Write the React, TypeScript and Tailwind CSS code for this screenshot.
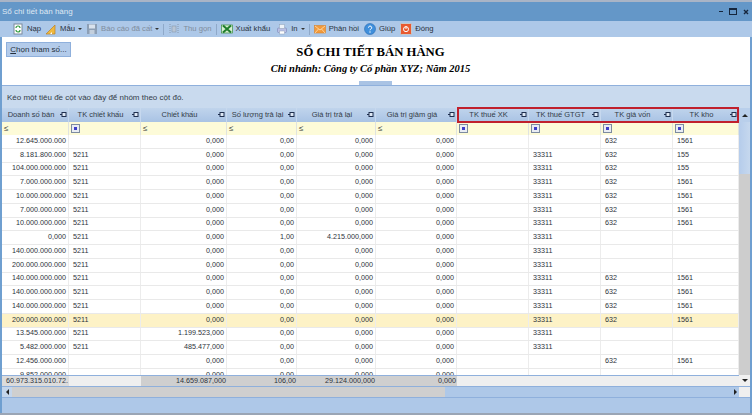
import React from "react";

const cols = "grid grid-cols-[67px_72px_86px_70px_79px_81px_72px_72px_72px_66px]";
type Row = string[];
const rows: Row[] = [
  ["12.645.000.000","","0,000","0,00","0,000","0,000","","","632","1561"],
  ["8.181.800.000","5211","0,000","0,00","0,000","0,000","","33311","632","155"],
  ["104.000.000.000","5211","0,000","0,00","0,000","0,000","","33311","632","155"],
  ["7.000.000.000","5211","0,000","0,00","0,000","0,000","","33311","632","1561"],
  ["10.000.000.000","5211","0,000","0,00","0,000","0,000","","33311","632","1561"],
  ["7.000.000.000","5211","0,000","0,00","0,000","0,000","","33311","632","1561"],
  ["10.000.000.000","5211","0,000","0,00","0,000","0,000","","33311","632","1561"],
  ["0,000","5211","0,000","1,00","4.215.000,000","0,000","","33311","",""],
  ["140.000.000.000","5211","0,000","0,00","0,000","0,000","","33311","",""],
  ["200.000.000.000","5211","0,000","0,00","0,000","0,000","","33311","",""],
  ["140.000.000.000","5211","0,000","0,00","0,000","0,000","","33311","632","1561"],
  ["140.000.000.000","5211","0,000","0,00","0,000","0,000","","33311","632","1561"],
  ["140.000.000.000","5211","0,000","0,00","0,000","0,000","","33311","632","1561"],
  ["200.000.000.000","5211","0,000","0,00","0,000","0,000","","33311","632","1561"],
  ["13.545.000.000","5211","1.199.523,000","0,00","0,000","0,000","","33311","",""],
  ["5.482.000.000","5211","485.477,000","0,00","0,000","0,000","","33311","",""],
  ["12.456.000.000","","0,000","0,00","0,000","0,000","","","632","1561"],
  ["9.852.000.000","","0,000","0,00","0,000","0,000","","","",""],
];
const rightAligned = [0, 2, 3, 4, 5];
const headers = ["Doanh số bán","TK chiết khấu","Chiết khấu","Số lượng trả lại","Giá trị trả lại","Giá trị giảm giá","TK thuế XK","TK thuế GTGT","TK giá vốn","TK kho"];
const filterKinds = ["le","box","le","le","le","le","box","box","box","box"];

function Pin() {
  return (
    <svg width="7" height="5" viewBox="0 0 7 5" className="shrink-0">
      <rect x="2" y="0.5" width="4" height="4" fill="#dfe9f6" stroke="#1f2f4f" />
      <rect x="0" y="2" width="2" height="1" fill="#1f2f4f" />
    </svg>
  );
}
function Box() {
  return (
    <span className="flex h-[9px] w-[9px] items-center justify-center border border-[#7d8ba0] bg-[#e9edf4]">
      <span className="h-[3px] w-[3px] bg-[#3f3fc8]" />
    </span>
  );
}
function Sep() {
  return <span className="h-[11px] w-px bg-[#8fa9c9]" />;
}
function Caret() {
  return <span className="h-0 w-0 border-x-[2px] border-t-[2px] border-x-transparent border-t-[#333]" />;
}
function Tool({ icon, label, dim, caret }: { icon: React.ReactNode; label: string; dim?: boolean; caret?: boolean }) {
  return (
    <div className="flex items-center gap-[3px]">
      {icon}
      <span className={dim ? "text-[#7f8c9c]" : "text-[#2a3340]"}>{label}</span>
      {caret && <Caret />}
    </div>
  );
}
const Ico = ({ children }: { children: React.ReactNode }) => (
  <svg width="12" height="12" viewBox="0 0 12 12" className="shrink-0">{children}</svg>
);

export default function App() {
  return (
    <div className="flex h-[415px] w-[752px] flex-col overflow-hidden bg-[#aec8e8] font-['Liberation_Sans',sans-serif]">
      <div className="h-[2px] shrink-0 bg-[#a9b4c6]" />
      <div className="flex h-[19px] shrink-0 items-center justify-between bg-[#6497c8] pl-[2px] pr-[3px] text-[8px] text-[#dfe8f3]">
        <span>Sổ chi tiết bán hàng</span>
        <div className="flex items-center gap-[6px] text-[#16263c]">
          <span className="h-[1.5px] w-[4px] bg-[#16263c]" />
          <span className="h-[7px] w-[8px] border border-t-2 border-[#16263c]" />
          <svg width="6" height="6" viewBox="0 0 6 6"><path d="M1 1l4 4M5 1L1 5" stroke="#16263c" strokeWidth="1.4" /></svg>
        </div>
      </div>
      <div className="flex h-[16px] shrink-0 items-center gap-[4px] bg-[#adc8e8] pl-[12px] text-[7.7px]">
        <Tool label="Nạp" icon={<Ico><rect x="2" y="1" width="8" height="10" fill="#fff" stroke="#7b8a9c" /><path d="M4 5a2 2 0 0 1 4 0M8 7a2 2 0 0 1-4 0" fill="none" stroke="#2f9a3a" strokeWidth="1.2" /></Ico>} />
        <Tool label="Mẫu" caret icon={<Ico><path d="M1 11L10 2v9z" fill="#f0b93e" stroke="#b9822a" strokeWidth="0.7" /><path d="M5 11l2-2v2z" fill="#fff" /></Ico>} />
        <Tool label="Báo cáo đã cất" dim caret icon={<Ico><path d="M1 1h10v10H1z" fill="#8d9fb5" /><rect x="3" y="1.5" width="6" height="4" fill="#d9e2ed" /><rect x="3.5" y="7" width="5" height="4" fill="#c3cfdd" /></Ico>} />
        <Sep />
        <Tool label="Thu gọn" dim icon={<Ico><path d="M2 1v10M10 1v10" stroke="#8698ac" strokeDasharray="1 1" /><rect x="4" y="3" width="4" height="6" fill="#b9c6d6" stroke="#8698ac" strokeWidth="0.6" /></Ico>} />
        <Sep />
        <Tool label="Xuất khẩu" icon={<Ico><rect x="0.5" y="2" width="11" height="8" fill="#d7efd2" stroke="#3a8f3f" strokeWidth="0.7" /><path d="M2 2.5l8 7M10 2.5l-8 7" stroke="#1e7d2c" strokeWidth="2" /></Ico>} />
        <div className="ml-[2px]">
          <Tool label="In" caret icon={<Ico><rect x="1.5" y="5" width="9" height="4.5" rx="1" fill="#b9bfe6" stroke="#7b86b5" strokeWidth="0.6" /><rect x="3.5" y="1.5" width="5" height="4" fill="#eef3f8" stroke="#8fa0b5" strokeWidth="0.5" /><rect x="3.5" y="8" width="5" height="3" fill="#fff" stroke="#8fa0b5" strokeWidth="0.5" /></Ico>} />
        </div>
        <Sep />
        <Tool label="Phản hồi" icon={<Ico><rect x="0.5" y="2.5" width="11" height="7.5" fill="#f29a3c" stroke="#d9822b" strokeWidth="0.6" /><path d="M1 3l5 4 5-4M1 10l3.5-4M11 10L7.5 6" fill="none" stroke="#ffe0b0" strokeWidth="0.8" /></Ico>} />
        <div className="ml-[1px]">
          <Tool label="Giúp" icon={<Ico><circle cx="6" cy="6" r="5.5" fill="#3f8fdc" stroke="#2b6cb0" strokeWidth="0.6" /><path d="M4.5 4.7a1.6 1.6 0 1 1 2.3 1.4c-.6.3-.8.6-.8 1.2" fill="none" stroke="#fff" strokeWidth="1" /><circle cx="6" cy="9" r=".7" fill="#fff" /></Ico>} />
        </div>
        <div className="ml-[1px]">
          <Tool label="Đóng" icon={<Ico><rect x="0.5" y="0.5" width="11" height="11" rx="1" fill="#e85a30" stroke="#c9c9c9" /><circle cx="6" cy="6.2" r="2.5" fill="none" stroke="#fff" strokeWidth="1" /><path d="M6 3v3" stroke="#fff" /></Ico>} />
        </div>
      </div>
      <div className="flex min-h-0 flex-1 flex-col border-x-[2px] border-[#6f9fd0]">
        <div className="relative h-[48px] shrink-0 bg-white">
          <div className="flex h-full">
            <div className="flex items-start pl-[4px] pt-[5px]">
              <button className="h-[15px] w-[65px] border border-[#8fb0dc] bg-[#b3cbea] text-[8px] leading-[13px] text-[#26303c]"><span className="underline">C</span>họn tham số...</button>
            </div>
            <div className="flex flex-1 flex-col items-center pr-[80px] pt-[7px] font-['Liberation_Serif',serif] font-bold text-black">
              <div className="text-[12.7px] leading-[16px]">SỔ CHI TIẾT BÁN HÀNG</div>
              <div className="mt-[1px] text-[10.5px] italic leading-[15px]">Chi nhánh: Công ty Cổ phần XYZ; Năm 2015</div>
            </div>
          </div>
          <div className="absolute bottom-0 left-[357px] h-[4px] w-[33px] bg-[#a9c3e4]" />
        </div>
        <div className="flex h-[23px] shrink-0 items-center border-t border-[#8fb0dc] bg-[#c9daee] pl-[5px] pt-[2px] text-[8px] text-[#333c48]">
          Kéo một tiêu đề cột vào đây để nhóm theo cột đó.
        </div>
        <div className="flex h-[278px] shrink-0">
          <div className="relative flex w-[737px] flex-col text-[7.2px] text-[#2c323a]">
            <div className={`${cols} h-[14px] shrink-0 bg-[#b4cce9]`}>
              {headers.map((h) => (
                <div key={h} className="relative flex items-center justify-center border-r border-[#c6d8ee] bg-gradient-to-b from-[#c0d4ec] to-[#a9c3e4] pr-[8px] text-[7.5px] text-[#333c48]">
                  <span className="whitespace-nowrap">{h}</span>
                  <span className="absolute right-[1px] top-[4px]"><Pin /></span>
                </div>
              ))}
            </div>
            <div className={`${cols} h-[13px] shrink-0 bg-[#fdfbd8]`}>
              {filterKinds.map((k, i) => (
                <div key={i} className="flex items-center border-r border-[#dfe3e0] pl-[2px] text-[8px] text-[#333]">
                  {k === "le" ? <span>≤</span> : <Box />}
                </div>
              ))}
            </div>
            <div className="min-h-0 flex-1 overflow-hidden bg-white">
              {rows.map((r, idx) => (
                <div key={idx} className={`${cols} h-[13.75px] border-b border-[#e9e9e9] ${idx === 13 ? "bg-[#fdf2c6]" : ""}`}>
                  {r.map((c, j) => (
                    <div key={j} className={`flex items-center border-r border-[#ececec] ${rightAligned.includes(j) ? "justify-end pr-[2px]" : "justify-start pl-[4px]"}`}>
                      <span className="whitespace-nowrap">{c}</span>
                    </div>
                  ))}
                </div>
              ))}
            </div>
            <div className={`${cols} h-[11px] shrink-0 border-t border-[#8fb0dc] bg-[#efefef]`}>
              {["60.973.315.010.72.","","14.659.087,000","106,00","29.124.000,000","0,000","","","",""].map((c, j) => (
                <div key={j} className={`flex items-center justify-end overflow-hidden whitespace-nowrap pr-[1px] ${[2, 3, 4, 5].includes(j) ? "bg-[#cfcfcf]" : j === 0 ? "bg-[#dcdcdc]" : ""}`}>
                  {c}
                </div>
              ))}
            </div>
            <div className="pointer-events-none absolute left-[455px] top-[-1px] h-[16px] w-[282px] border-2 border-[#c0202c]" />
          </div>
          <div className="flex w-[11px] shrink-0 flex-col bg-[#cdcdcd]">
            <div className="flex h-[14px] shrink-0 items-center justify-center bg-[#b9cfeb]">
              <span className="h-0 w-0 border-x-[3px] border-b-[3px] border-x-transparent border-b-[#222]" />
            </div>
            <div className="h-[52px] shrink-0 bg-gradient-to-r from-[#b5cceb] to-[#c6d8ee]" />
            <div className="flex-1" />
            <div className="flex h-[11px] shrink-0 items-center justify-center bg-[#f0f0f0]">
              <span className="h-0 w-0 border-x-[3px] border-t-[3px] border-x-transparent border-t-[#222]" />
            </div>
          </div>
        </div>
        <div className="flex h-[12px] shrink-0 items-center border-y border-[#8fb0dc] bg-[#aec8e8]">
          <div className="flex h-full w-[10px] items-center justify-center bg-[#c4d6ec]">
            <span className="h-0 w-0 border-y-[3px] border-r-[3px] border-y-transparent border-r-[#222]" />
          </div>
          <div className="h-full w-[433px] bg-[#cfcfcf]" />
          <div className="flex h-full flex-1 items-center justify-end pr-[2px]">
            <span className="h-0 w-0 border-y-[3px] border-l-[3px] border-y-transparent border-l-[#222]" />
          </div>
          <div className="h-full w-[11px] bg-[#efefef]" />
        </div>
        <div className="flex-1 bg-[#aec8e8]" />
      </div>
      <div className="h-[2px] shrink-0 bg-[#9aa5b5]" />
    </div>
  );
}
